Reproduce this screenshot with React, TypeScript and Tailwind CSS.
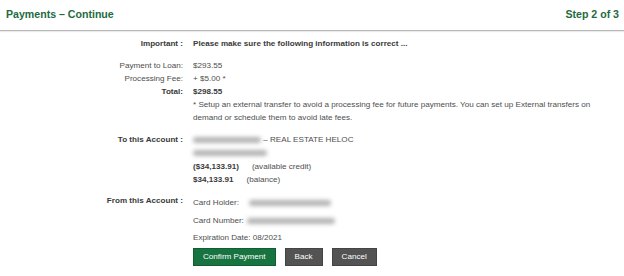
import React from "react";

const Blur = ({ w, ml = 0 }: { w: number; ml?: number }) => (
  <span
    className="inline-block align-middle h-[6px] bg-[#a0a0a0] rounded-full blur-[2px] opacity-80"
    style={{ width: w, marginLeft: ml }}
  />
);

export default function App() {
  return (
    <div className="w-[624px] h-[276px] bg-white overflow-hidden font-['Liberation_Sans',Arial,sans-serif] text-[8.1px] text-[#4e4e4e]">
      <div className="h-[31px] flex items-center justify-between px-[6px] border-b border-[#b8b8b8] shadow-[0_1px_1px_rgba(0,0,0,0.08)]">
        <span className="text-[10.6px] font-bold text-[#1d6b3e]">Payments – Continue</span>
        <span className="text-[10.6px] font-bold text-[#1d6b3e] mr-[-1px]">Step 2 of 3</span>
      </div>

      <div className="pt-[6px] leading-[13px]">
        <div className="flex">
          <div className="w-[183px] text-right font-bold text-[#3a3a3a]">Important :</div>
          <div className="ml-[10px] font-bold text-[#3a3a3a]">Please make sure the following information is correct ...</div>
        </div>

        <div className="flex mt-[9px]">
          <div className="w-[183px] text-right">
            <div>Payment to Loan:</div>
            <div>Processing Fee:</div>
            <div className="font-bold text-[#3a3a3a]">Total:</div>
          </div>
          <div className="ml-[10px]">
            <div>$293.55</div>
            <div>+ $5.00 *</div>
            <div className="font-bold text-[#3a3a3a]">$298.55</div>
            <div className="w-[405px]">
              * Setup an external transfer to avoid a processing fee for future payments. You can set up External transfers on demand or schedule them to avoid late fees.
            </div>
          </div>
        </div>

        <div className="flex mt-[9px] leading-[13.3px]">
          <div className="w-[183px] text-right font-bold text-[#3a3a3a]">To this Account :</div>
          <div className="ml-[10px]">
            <div>
              <Blur w={68} />
              <span> – REAL ESTATE HELOC</span>
            </div>
            <div>
              <Blur w={74} />
            </div>
            <div>
              <span className="font-bold text-[#3a3a3a]">($34,133.91)</span>
              <span className="ml-[13px]">(available credit)</span>
            </div>
            <div>
              <span className="font-bold text-[#3a3a3a]">$34,133.91</span>
              <span className="ml-[13px]">(balance)</span>
            </div>
          </div>
        </div>

        <div className="flex mt-[8px]">
          <div className="w-[183px] text-right font-bold text-[#3a3a3a]">From this Account :</div>
          <div className="ml-[10px] leading-[17.5px] -mt-[2px]">
            <div className="mt-[2px]">
              Card Holder:
              <Blur w={82} ml={10} />
            </div>
            <div>
              Card Number:
              <Blur w={88} ml={3} />
            </div>
            <div>Expiration Date: 08/2021</div>
            <div className="flex gap-[9px] mt-[1px]">
              <button className="h-[18px] px-[9px] bg-[#17733f] text-white leading-[16px] border border-[#0f5e31]">Confirm Payment</button>
              <button className="h-[18px] px-[9px] bg-[#535353] text-white leading-[16px] border border-[#444]">Back</button>
              <button className="h-[18px] px-[9px] bg-[#535353] text-white leading-[16px] border border-[#444]">Cancel</button>
            </div>
          </div>
        </div>
      </div>
    </div>
  );
}
